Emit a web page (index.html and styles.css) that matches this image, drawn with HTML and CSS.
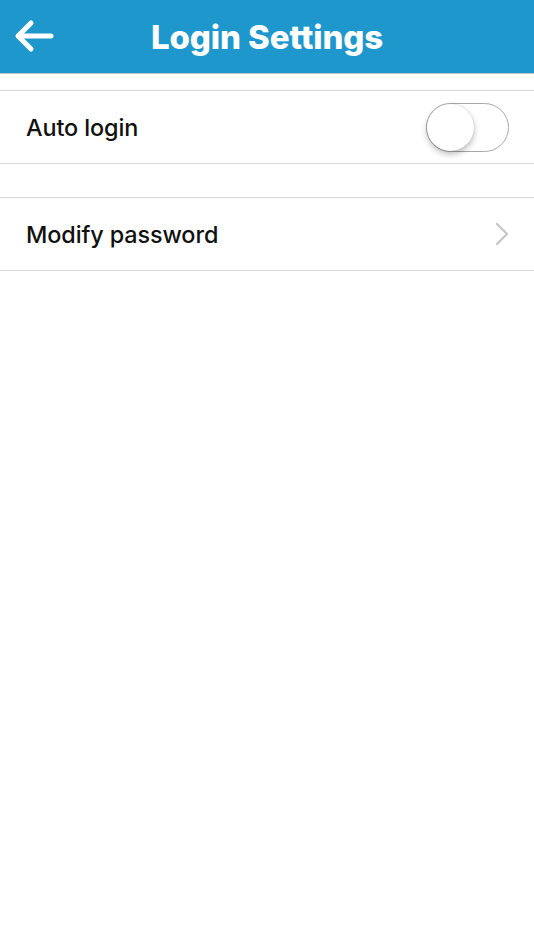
FILE: index.html
```html
<!DOCTYPE html>
<html lang="en">
<head>
  <meta charset="UTF-8">
  <title>Login Settings</title>
  <link rel="stylesheet" href="styles.css">
</head>
<body>

  <header class="topbar">
    <span class="back">
      <svg width="40" height="34" viewBox="0 0 40 34">
        <path d="M37 17H5M17 4L4 17l13 13" fill="none" stroke="#fff" stroke-width="5" stroke-linecap="round" stroke-linejoin="round"/>
      </svg>
    </span>
    <h1 class="title">Login Settings</h1>
  </header>

  <div class="group">
    <div class="row">
      <span class="label">Auto login</span>
      <span class="switch"><span class="knob"></span></span>
    </div>
  </div>

  <div class="group">
    <div class="row">
      <span class="label">Modify password</span>
      <svg class="chevron" width="14" height="24" viewBox="0 0 14 24">
        <path d="M2 2l10 10L2 22" fill="none" stroke="#c7c7cc" stroke-width="2.4" stroke-linecap="round" stroke-linejoin="round"/>
      </svg>
    </div>
  </div>

</body>
</html>
```

FILE: styles.css
```css
body {
  margin: 0;
  font-family: Inter, Roboto, "Noto Sans", sans-serif;
  background: #fff;
  color: #111;
}
.topbar {
  height: 73px;
  background-color: #1e98cc;
  border-bottom: 1px solid #c4c4c4;
  display: flex;
  align-items: center;
  position: relative;
}
.back {
  position: absolute;
  left: 14px;
  top: 19px;
  line-height: 0;
}
.title {
  margin: 0;
  width: 100%;
  text-align: center;
  color: #fff;
  font-size: 33px;
  font-weight: 800;
  letter-spacing: -0.1px;
}
.group {
  margin-top: 16px;
  border-top: 1px solid #d8d8d8;
  border-bottom: 1px solid #d8d8d8;
}
.group + .group {
  margin-top: 33px;
}
.row {
  height: 72px;
  padding: 0 25px 0 26px;
  display: flex;
  align-items: center;
  justify-content: space-between;
}
.label {
  font-size: 23.4px;
  font-weight: 500;
  letter-spacing: -0.1px;
}
.switch {
  width: 81px;
  height: 47px;
  border: 1.5px solid #a8a8a8;
  border-radius: 25px;
  position: relative;
  background: #fff;
}
.knob {
  position: absolute;
  left: 0;
  top: 0;
  width: 47px;
  height: 47px;
  border-radius: 50%;
  background: #fff;
  box-shadow: 0 3px 6px rgba(0,0,0,0.28), 0 0 1px rgba(0,0,0,0.2);
}
```
